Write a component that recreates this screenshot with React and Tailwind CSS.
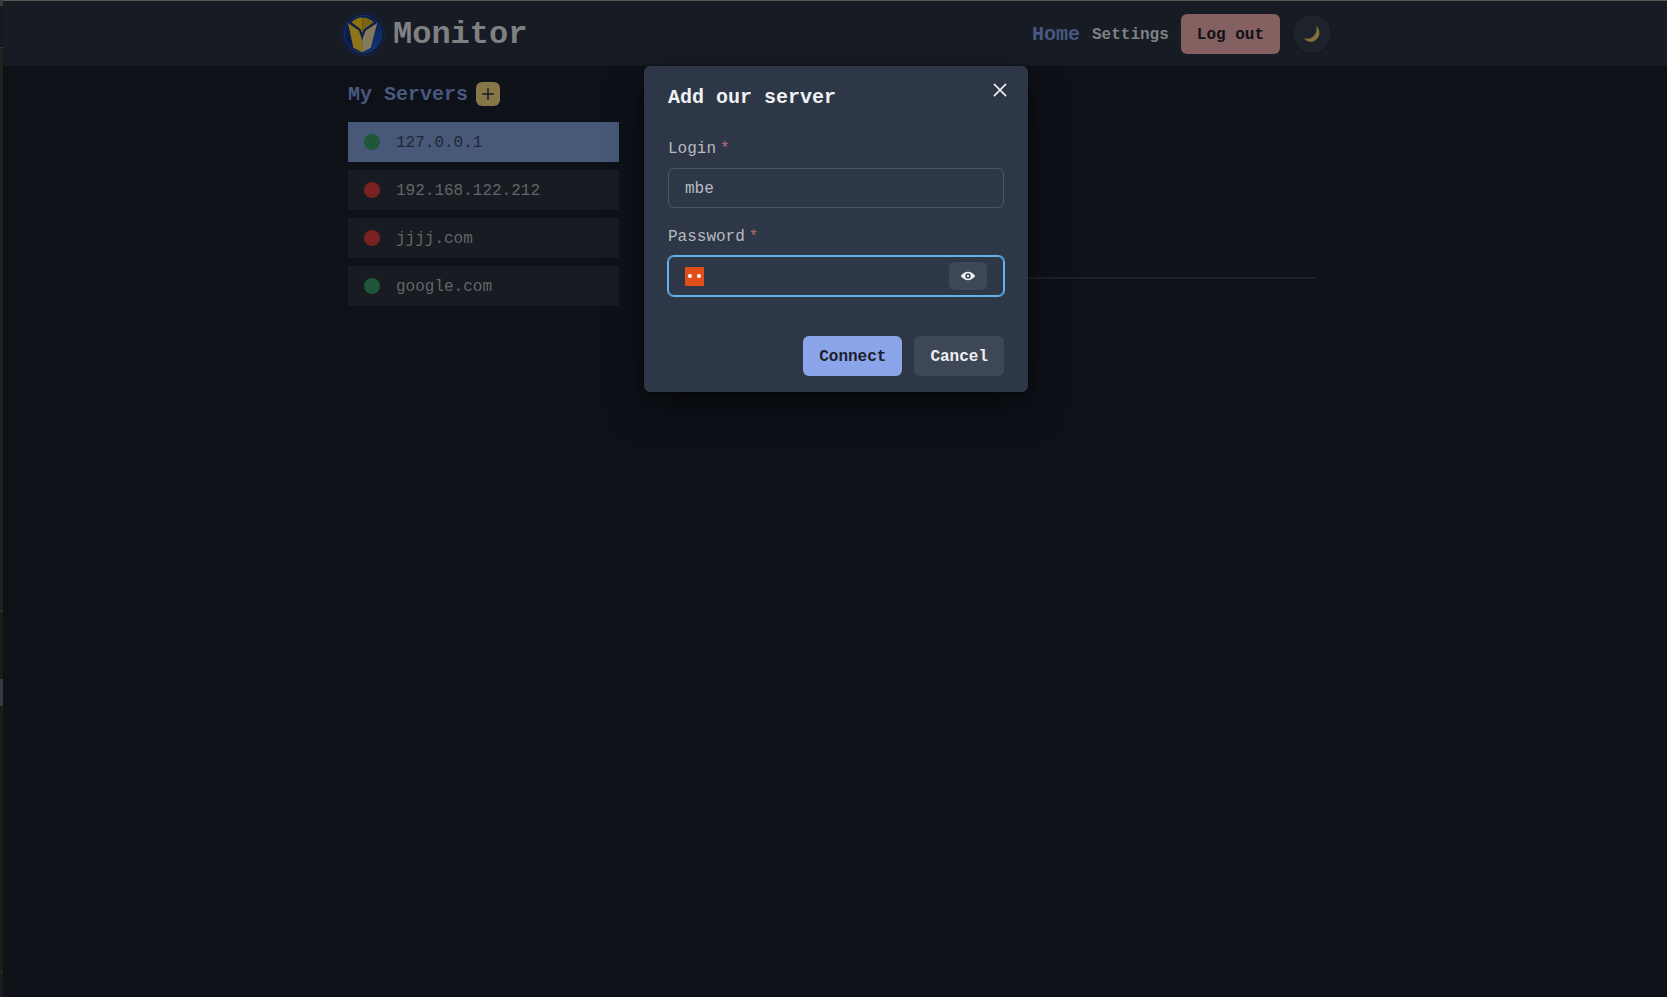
import React from "react";

const servers = [
  { host: "127.0.0.1", up: true, active: true },
  { host: "192.168.122.212", up: false },
  { host: "jjjj.com", up: false },
  { host: "google.com", up: true },
];

function Logo() {
  return (
    <svg className="h-[46px] w-[46px] shrink-0" viewBox="0 0 46 46">
      <defs>
        <linearGradient id="disc" x1="0" y1="0" x2="1" y2="1">
          <stop offset="0" stopColor="#0a2050" />
          <stop offset="0.4" stopColor="#0b1b46" />
          <stop offset="1" stopColor="#143a85" />
        </linearGradient>
      </defs>
      <circle cx="23" cy="23.3" r="21.4" fill="#121a2b" stroke="#13264f" strokeWidth="1" />
      <circle cx="23" cy="23.3" r="18.8" fill="url(#disc)" stroke="#12306f" strokeWidth="1" />
      <path d="M11.5 11.2Q16 6.7 22.3 6.5V22.5L20.6 18.2Z" fill="#8f720b" />
      <path d="M22.3 6.5Q29 6.7 33.8 11.2L24 18.2L22.3 22.5Z" fill="#7b6310" />
      <path d="M8 12L18.8 19.4L21.4 26.5L22.2 30V41.3L13.4 36.8Z" fill="#8e7318" />
      <path d="M37.2 12L25.7 19.4L23 26.5L22.2 30V41.3L30.8 36.8Z" fill="#827a58" />
    </svg>
  );
}

function Header() {
  return (
    <header className="flex h-[65px] shrink-0 items-center bg-[#171b23] pl-[337px] pr-[335px]">
      <Logo />
      <span className="ml-[7px] pt-[3px] text-[32px] font-bold leading-10 text-[#7f8081]">Monitor</span>
      <nav className="ml-auto flex items-center gap-3">
        <a className="pt-0.5 text-xl font-bold text-[#485880]">Home</a>
        <a className="pt-0.5 text-base font-bold text-[#7f8183]">Settings</a>
        <button className="h-10 rounded-md bg-[#856060] px-4 pt-0.5 text-base font-bold text-[#0e1118]">Log out</button>
        <button className="flex h-10 w-10 items-center justify-center rounded-full border border-[#151619] bg-[#1e222a]">
          <svg className="h-5 w-5" viewBox="0 0 20 20">
            <path d="M14.2 1.5C19 6.5 18.2 13 13.5 16.2C9.5 18.8 4.5 18 2 14.3C6 15.4 9.7 14.2 12 11.7C14.6 9 15.2 5.5 14.2 1.5Z" fill="#84703a" />
          </svg>
        </button>
      </nav>
    </header>
  );
}

function Sidebar() {
  return (
    <aside className="w-[271px]">
      <div className="flex h-6 items-center gap-2">
        <h2 className="pt-0.5 text-xl font-bold text-[#485880]">My Servers</h2>
        <button className="flex h-6 w-6 items-center justify-center rounded-md bg-[#857748]">
          <svg className="h-3 w-3" viewBox="0 0 12 12" stroke="#171b23" strokeWidth="1.5" strokeLinecap="round">
            <path d="M6 .7V11.3M.7 6H11.3" />
          </svg>
        </button>
      </div>
      <ul className="mt-4 flex flex-col gap-2">
        {servers.map((s) => (
          <li
            key={s.host}
            className={
              "flex h-10 items-center gap-4 px-4 text-base " +
              (s.active ? "bg-[#485878] text-[#1f2738]" : "bg-[#181b21] text-[#646567]")
            }
          >
            <span className={"h-4 w-4 rounded-full " + (s.up ? "bg-[#1f5637]" : "bg-[#792121]")} />
            <span className="pt-0.5">{s.host}</span>
          </li>
        ))}
      </ul>
    </aside>
  );
}

function Label({ children }) {
  return (
    <label className="mb-2 flex h-6 items-center pt-0.5 text-base text-[#b9bbbe]">
      {children}
      <span className="ml-1 text-[#b96a70]">*</span>
    </label>
  );
}

function AddServerDialog() {
  return (
    <section
      role="dialog"
      className="absolute left-[644px] top-[66px] flex h-[326px] w-96 flex-col rounded-md bg-[#2d3748] px-6 shadow-[0_0_0_1px_rgba(0,0,0,0.1),0_5px_10px_rgba(0,0,0,0.2),0_15px_40px_rgba(0,0,0,0.4)]"
    >
      <div className="flex h-[62px] items-start justify-between">
        <h1 className="mt-[17px] text-xl font-bold leading-[30px] text-[#f0f1f3]">Add our server</h1>
        <svg className="-mr-[2px] mt-[18px] h-3 w-3 overflow-visible" viewBox="0 0 12 12" fill="none" stroke="#eef0f2" strokeWidth="1.6" strokeLinecap="round">
          <path d="M.4.4L11.6 11.6M11.6.4L.4 11.6" />
        </svg>
      </div>
      <div className="mt-2">
        <Label>Login</Label>
        <div className="flex h-10 items-center rounded-md border border-[#4c5565] px-4 pt-0.5 text-base text-[#b9bbbe]">mbe</div>
      </div>
      <div className="mt-4">
        <Label>Password</Label>
        <div className="flex h-10 items-center justify-between rounded-md border border-[#63b3ed] px-4 shadow-[0_0_0_1px_#63b3ed]">
          <span className="flex h-[19px] w-[19px] items-center justify-around bg-[#e04e1a]">
            <i className="h-1 w-1 rounded-full bg-white" />
            <i className="h-1 w-1 rounded-full bg-white" />
          </span>
          <button className="flex h-7 w-[38px] items-center justify-center rounded-md bg-[#3f4857]">
            <svg className="h-3.5 w-3.5" viewBox="0 0 24 24" fill="#eff0f2">
              <path fillRule="evenodd" d="M23.432 10.524C20.787 7.614 16.4 4.538 12 4.6 7.6 4.537 3.213 7.615.568 10.524a2.211 2.211 0 0 0 0 2.948C3.182 16.351 7.507 19.4 11.839 19.4h.308c4.347 0 8.671-3.049 11.288-5.929a2.21 2.21 0 0 0-.003-2.947ZM7.4 12a4.6 4.6 0 1 1 9.2 0 4.6 4.6 0 0 1-9.2 0Z" />
              <circle cx="12" cy="12" r="2" />
            </svg>
          </button>
        </div>
      </div>
      <div className="mt-10 flex justify-end gap-3">
        <button className="h-10 rounded-md bg-[#8aa5ea] px-4 pt-0.5 text-base font-bold text-[#1a202c]">Connect</button>
        <button className="h-10 rounded-md bg-[#3e4755] px-4 pt-0.5 text-base font-bold text-[#eff0f2]">Cancel</button>
      </div>
    </section>
  );
}

export default function App() {
  return (
    <div className="relative flex h-[997px] w-[1667px] overflow-hidden bg-[#0e1118] font-['Courier_New','Liberation_Mono',monospace]">
      <div className="flex w-[3px] shrink-0 flex-col bg-[#1b1c19]">
        <div className="h-[6px] bg-[#3a3a3a]" />
        <div className="h-[41px] bg-[#181818]" />
        <div className="h-px bg-[#343434]" />
        <div className="h-[563px] bg-[#20211f]" />
        <div className="h-px bg-[#343434]" />
        <div className="h-[67px] bg-[#1b1c17]" />
        <div className="h-[27px] bg-[#3a3a3e]" />
        <div className="h-[265px] bg-[#1b1c17]" />
        <div className="h-px bg-[#343434]" />
      </div>
      <div className="flex min-w-0 flex-1 flex-col">
        <div className="h-px shrink-0 bg-[#54564f]" />
        <Header />
        <main className="flex gap-8 pl-[345px] pr-[351px] pt-4">
          <Sidebar />
          <hr className="mt-[195px] h-0.5 flex-1 border-0 bg-[#1f2024]" />
        </main>
      </div>
      <AddServerDialog />
    </div>
  );
}
